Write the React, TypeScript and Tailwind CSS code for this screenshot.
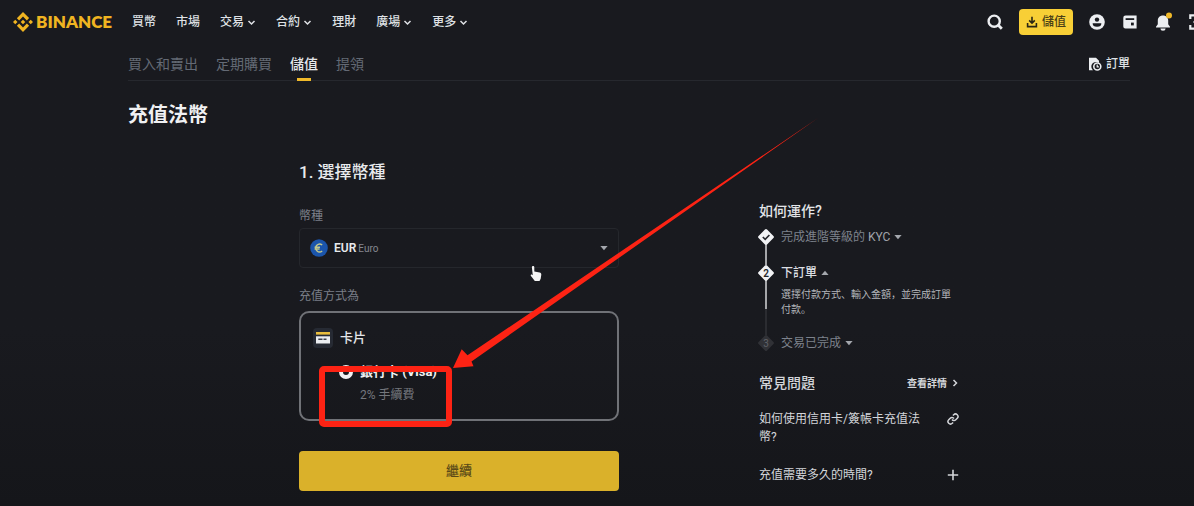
import React from "react";

const NAV: { label: string; menu?: boolean }[] = [
  { label: "買幣" },
  { label: "市場" },
  { label: "交易", menu: true },
  { label: "合約", menu: true },
  { label: "理財" },
  { label: "廣場", menu: true },
  { label: "更多", menu: true },
];

const TABS = ["買入和賣出", "定期購買", "儲值", "提領"];
const ACTIVE_TAB = "儲值";

function Logo() {
  return (
    <a href="#" className="flex items-center gap-[3px] text-[#f0b421]">
      <svg viewBox="0 0 24 24" className="size-5" fill="currentColor" aria-hidden="true">
        <path d="M16.624 13.9202l2.7175 2.7154-7.353 7.353-7.353-7.352 2.7175-2.7164 4.6355 4.6595 4.6356-4.6595zm4.6366-4.6366L24 12l-2.7154 2.7164L18.5682 12l2.6924-2.7164zm-9.272.001l2.7163 2.6914-2.7164 2.7174v-.001L9.2721 12l2.7164-2.7154zm-9.2722-.001L5.4088 12l-2.6914 2.6924L0 12l2.7164-2.7164zM11.9885.0115l7.353 7.329-2.7174 2.7154-4.6356-4.6356-4.6355 4.6595-2.7174-2.7154 7.353-7.353z" />
      </svg>
      <span className="font-['Lato','Inter',sans-serif] text-[17px] leading-5 font-extrabold">BINANCE</span>
    </a>
  );
}

function Chevron() {
  return (
    <svg viewBox="0 0 9 9" className="size-[9px]" fill="none" stroke="currentColor" strokeWidth="1.5" aria-hidden="true">
      <path d="M1.5 3l3 3 3-3" />
    </svg>
  );
}

function Caret({ up = false }: { up?: boolean }) {
  return (
    <svg viewBox="0 0 8 6" className="h-1.5 w-2 shrink-0" fill="#a4a7ad" aria-hidden="true">
      <path d={up ? "M4 .8L7.6 5H.4z" : "M.4 1h7.2L4 5.2z"} />
    </svg>
  );
}

function Header() {
  return (
    <header className="flex h-11 items-center pl-[13px] text-[#dfe1e5]">
      <Logo />
      <nav className="ml-5 flex items-center gap-5 text-xs font-medium">
        {NAV.map((n) => (
          <a key={n.label} href="#" className="flex items-center gap-[3px] whitespace-nowrap">
            {n.label}
            {n.menu && <Chevron />}
          </a>
        ))}
      </nav>
      <div className="ml-auto -mr-[11px] flex shrink-0 items-center">
        <button aria-label="搜尋" className="mr-4 text-[#eceef1]">
          <svg viewBox="0 0 16 16" className="size-4" fill="none" stroke="currentColor" strokeWidth="2.4">
            <circle cx="7.2" cy="7.2" r="5.6" />
            <path d="M10.8 10.8l4 4" strokeWidth="2.8" />
          </svg>
        </button>
        <button className="mr-4 flex h-[26px] items-center gap-1 rounded bg-[#f8cf36] px-[7px] text-xs font-medium text-[#4a3f17]">
          <svg viewBox="0 0 12 12" className="size-3" fill="none" stroke="#2a2614" strokeWidth="1.6" aria-hidden="true">
            <path d="M6 .8v6M3.2 4.4L6 7.2l2.8-2.8M1.6 7v3.6h8.8V7" />
          </svg>
          儲值
        </button>
        <button aria-label="帳戶" className="mr-[18px]">
          <svg viewBox="0 0 16 16" className="size-4">
            <circle cx="8" cy="8" r="7.8" fill="#eceef1" />
            <circle cx="8" cy="5.6" r="2.2" fill="#191a1f" />
            <path d="M3.6 9.2h8.8A4.4 3.6 0 0 1 8 12.8 4.4 3.6 0 0 1 3.6 9.2z" fill="#191a1f" />
          </svg>
        </button>
        <button aria-label="錢包" className="mr-[18px]">
          <svg viewBox="0 0 14 14" className="size-3.5">
            <path d="M2.6.4H13.6V13.6H2.4A2.2 2.2 0 0 1 .3 11.4V2.7A2.3 2.3 0 0 1 2.6.4z" fill="#eceef1" />
            <path d="M2.6 3.2H11.2V5H2.600z" fill="#191a1f" />
            <path d="M8 7.600h2.800v2.800H8z" fill="#191a1f" />
          </svg>
        </button>
        <button aria-label="通知" className="mr-4">
          <svg viewBox="0 0 18 20" className="h-5 w-[18px]">
            <path d="M8 3.400c3.200 0 5.200 2.200 5.200 5.200v3.600l1.800 2.600v.8H1v-.8l1.800-2.600V8.600c0-3 2-5.200 5.200-5.200z" fill="#eceef1" />
            <path d="M5.400 16.600h5.200a2.600 2.200 0 0 1-5.200 0z" fill="#eceef1" />
            <circle cx="14" cy="3.400" r="3" fill="#f0b92a" />
          </svg>
        </button>
        <button aria-label="掃描">
          <svg viewBox="0 0 16 16" className="size-4" fill="none" stroke="#eceef1" strokeWidth="2.200">
            <path d="M1.300 5V1.300H5M11 1.300h3.700V5M14.700 11v3.700H11M5 14.700H1.300V11M4.500 8h7" />
          </svg>
        </button>
      </div>
    </header>
  );
}

function TabBar() {
  return (
    <div className="mt-1 flex h-[33px] items-stretch justify-between border-b border-[#26282e]">
      <nav className="flex gap-[18px] text-sm text-[#646a75]">
        {TABS.map((t) =>
          t === ACTIVE_TAB ? (
            <a key={t} href="#" aria-current="page" className="relative flex items-center whitespace-nowrap font-medium text-[#e6e8eb]">
              {t}
              <span className="absolute -bottom-px left-1/2 h-[3px] w-3.5 -translate-x-1/2 bg-[#f0b92a]" />
            </a>
          ) : (
            <a key={t} href="#" className="flex items-center whitespace-nowrap">
              {t}
            </a>
          ),
        )}
      </nav>
      <a href="#" className="flex items-center gap-1 text-xs font-medium text-[#dfe1e5]">
        <svg viewBox="0 0 14 14" className="size-3.5" aria-hidden="true">
          <path d="M1 .8H8L11 3.800V6A4.500 4.500 0 0 0 5 13.200H1z" fill="#eceef1" />
          <circle cx="9.300" cy="9.500" r="3.500" fill="#191a1f" stroke="#eceef1" strokeWidth="1.600" />
          <path d="M9.200 7.600v2.200h1.700" fill="none" stroke="#eceef1" strokeWidth="1.200" />
        </svg>
        訂單
      </a>
    </div>
  );
}

function Pointer() {
  return (
    <svg viewBox="0 0 12 17" className="pointer-events-none absolute top-9 left-[230px] h-[17px] w-3" aria-hidden="true">
      <path
        d="M3 1c.8 0 1.300.5 1.300 1.200v4.300l5.300 1c1.200.3 1.800 1 1.700 2.200l-.6 4-1.200 2.300H4.800L.800 10.800c-.4-.7.300-1.500 1-1.200l1 .6-.9-7.800C1.800 1.600 2.300 1 3 1z"
        fill="#f4f4f4"
      />
    </svg>
  );
}

function Callout() {
  return (
    <div className="pointer-events-none" aria-hidden="true">
      <div className="absolute top-[53px] left-[18px] z-10 h-[61px] w-[133px] rounded-[5px] border-6 border-[#fd2314]" />
      <svg viewBox="0 0 366 251" className="absolute -top-[195px] left-[152px] z-10 h-[251px] w-[366px]">
        <path d="M0 250L8.700 231.300 14.500 237.300 365 0 18.500 243.500 20.500 248.200z" fill="#fd2314" />
      </svg>
    </div>
  );
}

function CardIcon() {
  return (
    <svg viewBox="0 0 20 20" className="size-5" aria-hidden="true">
      <rect width="20" height="20" rx="4" fill="#262a33" />
      <rect x="3" y="4" width="14" height="2.600" fill="#e9bd3c" />
      <path d="M3 8.300h14V15.500H3z" fill="#eceef1" />
      <path d="M5.300 10.500h4.200v1.600H5.300zM10.500 10.500h3v1.600h-3z" fill="#3a3f49" />
    </svg>
  );
}

function DepositForm() {
  return (
    <form className="flex w-80 flex-col" onSubmit={(e) => e.preventDefault()}>
      <h2 className="text-[17px] leading-6 font-medium text-[#e8eaed]">1. 選擇幣種</h2>

      <label htmlFor="currency" className="mt-6 text-xs leading-4 text-[#7b7f88]">
        幣種
      </label>
      <div className="relative mt-1 flex h-10 items-center rounded border border-[#25272c] px-2.5">
        <svg viewBox="0 0 18 18" className="size-[18px]" aria-hidden="true">
          <circle cx="9" cy="9" r="8.800" fill="#1b55ab" />
          <path d="M12.200 6A3.900 3.900 0 1 0 12.200 12M4.600 8.200h5.400M4.600 10h5" fill="none" stroke="#c3c98c" strokeWidth="1.400" />
        </svg>
        <span className="ml-1.5 text-xs font-semibold text-[#e8eaed]">EUR</span>
        <select id="currency" className="ml-0.5 flex-1 appearance-none bg-transparent text-[10px] text-[#85888f] outline-none">
          <option>Euro</option>
        </select>
        <Caret />
        <Pointer />
      </div>

      <fieldset className="mt-5">
        <legend className="text-xs leading-4 text-[#7b7f88]">充值方式為</legend>
        <div className="relative mt-[7px] h-[110px] rounded-[10px] border-2 border-[#707277] px-3 pt-[15px]">
          <div className="flex items-center gap-[7px] text-[13px] leading-5 font-medium text-[#e3e5e8]">
            <CardIcon />
            卡片
          </div>
          <label className="mt-3.5 ml-[26px] flex items-center text-[13px] leading-5 font-bold text-[#f0f1f3]">
            <input
              type="radio"
              name="method"
              defaultChecked
              aria-describedby="fee"
              className="mr-[7px] size-3.5 shrink-0 appearance-none rounded-full border-4 border-[#f0f1f3] bg-[#191a1f]"
            />
            銀行卡 (Visa)
          </label>
          <p id="fee" className="mt-[3px] ml-[47px] text-xs leading-5 text-[#74777d]">
            2% 手續費
          </p>
          <Callout />
        </div>
      </fieldset>

      <button className="mt-[30px] h-10 rounded bg-[#dab12a] text-[13px] font-medium text-[#5a4a18]">繼續</button>
    </form>
  );
}

function Diamond({ children, done = true }: { children: React.ReactNode; done?: boolean }) {
  return (
    <svg viewBox="0 0 18 18" className="-my-px size-[18px] shrink-0" aria-hidden="true">
      <rect x="3" y="3" width="12" height="12" rx="1.500" transform="rotate(45 9 9)" fill={done ? "#f2f3f5" : "#303136"} />
      {children}
    </svg>
  );
}

function Steps() {
  return (
    <ol className="mt-2 text-xs leading-4">
      <li className="flex h-9 gap-1">
        <div className="-ml-0.5 flex w-[18px] shrink-0 flex-col items-center">
          <Diamond>
            <path d="M5.800 9l2.400 2.300L12.400 7" fill="none" stroke="#24262b" strokeWidth="1.600" />
          </Diamond>
          <div className="w-0.5 flex-1 bg-[#a5a6a9]" />
        </div>
        <button className="ml-0.5 flex h-4 items-center gap-1 whitespace-nowrap text-[#7d828c]">
          <span>
            完成進階等級的 <span className="text-[#a0a3a9]">KYC</span>
          </span>
          <Caret />
        </button>
      </li>
      <li className="flex h-[70px] gap-1">
        <div className="-ml-0.5 flex w-[18px] shrink-0 flex-col items-center">
          <Diamond>
            <text x="9" y="12.500" textAnchor="middle" fontSize="10" fontWeight="600" fill="#24262b">
              2
            </text>
          </Diamond>
          <div className="h-7 w-0.5 bg-[#a5a6a9]" />
          <div className="w-0.5 flex-1 bg-[#2b2c31]" />
        </div>
        <div className="ml-0.5">
          <button className="flex h-4 items-center gap-1 font-medium text-[#dcdee2]">
            下訂單
            <Caret up />
          </button>
          <p className="mt-1.5 text-[10px] leading-[15px] text-[#b4b6bb]">選擇付款方式、輸入金額，並完成訂單付款。</p>
        </div>
      </li>
      <li className="flex gap-1">
        <div className="-ml-0.5 flex w-[18px] shrink-0 flex-col items-center">
          <Diamond done={false}>
            <text x="9" y="12.500" textAnchor="middle" fontSize="10" fill="#606268">
              3
            </text>
          </Diamond>
        </div>
        <button className="ml-0.5 flex h-4 items-center gap-1 text-[#7d828c]">
          交易已完成
          <Caret />
        </button>
      </li>
    </ol>
  );
}

function Help() {
  return (
    <aside className="w-[200px] shrink-0 pt-[41px] text-[#d3d5d9]">
      <h3 className="text-sm leading-5 font-medium text-[#e3e5e8]">如何運作?</h3>
      <Steps />
      <div className="mt-[22px] flex items-center justify-between">
        <h3 className="text-sm leading-5 font-medium">常見問題</h3>
        <a href="#" className="flex items-center gap-1 text-[10px] font-bold">
          查看詳情
          <svg viewBox="0 0 8 8" className="size-2" fill="none" stroke="currentColor" strokeWidth="1.500" aria-hidden="true">
            <path d="M2.500 1l3 3-3 3" />
          </svg>
        </a>
      </div>
      <ul className="mt-[17px] flex flex-col gap-5 text-xs leading-[18px]">
        <li className="flex items-start justify-between">
          <a href="#" className="w-[168px]">
            如何使用信用卡/簽帳卡充值法幣?
          </a>
          <svg viewBox="0 0 24 24" className="mt-[3px] size-3 shrink-0" fill="none" stroke="currentColor" strokeWidth="3" aria-hidden="true">
            <path d="M10 13a5 5 0 0 0 7.540.540l3-3a5 5 0 0 0-7.070-7.070l-1.720 1.710" />
            <path d="M14 11a5 5 0 0 0-7.540-.540l-3 3a5 5 0 0 0 7.070 7.070l1.710-1.710" />
          </svg>
        </li>
        <li>
          <button className="flex w-full items-center justify-between text-left">
            充值需要多久的時間?
            <svg viewBox="0 0 12 12" className="size-3" stroke="currentColor" strokeWidth="1.600" aria-hidden="true">
              <path d="M6 .8v10.400M.8 6h10.400" />
            </svg>
          </button>
        </li>
      </ul>
    </aside>
  );
}

export default function App() {
  return (
    <div
      lang="zh-Hans"
      className="min-h-screen overflow-x-hidden bg-linear-to-b from-[#191a1f] from-65% to-[#15161a] font-['Roboto','Noto_Sans_CJK_SC',sans-serif]"
    >
      <Header />
      <main className="pr-16 pl-32">
        <TabBar />
        <h1 className="mt-5 text-xl leading-7 font-bold text-[#f0f1f3]">充值法幣</h1>
        <div className="flex justify-center gap-[140px]">
          <div className="pt-[31px]">
            <DepositForm />
          </div>
          <div className="pt-[31px]">
            <Help />
          </div>
        </div>
      </main>
    </div>
  );
}
